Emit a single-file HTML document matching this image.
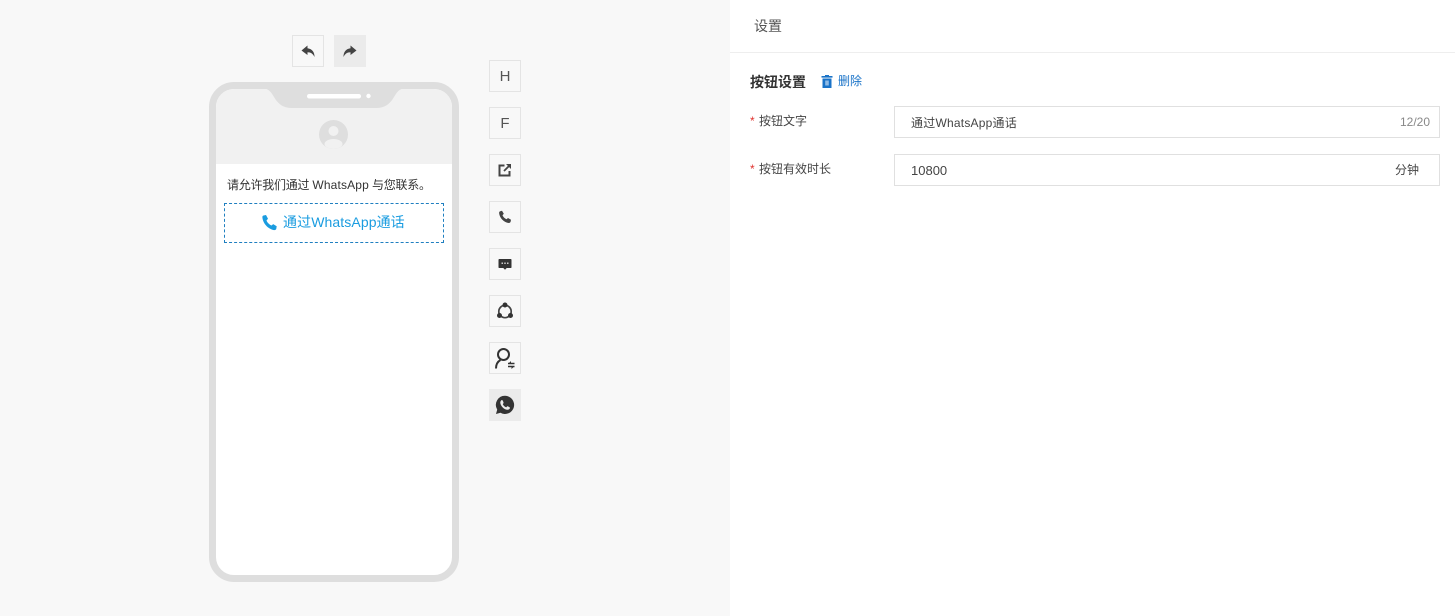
<!DOCTYPE html>
<html><head><meta charset="utf-8"><style>
html,body{margin:0;padding:0;width:1455px;height:616px;overflow:hidden;background:#f8f8f8;font-family:"Liberation Sans","Noto Sans CJK SC",sans-serif}
#o{position:fixed;left:0;top:0;width:1455px;height:616px;overflow:hidden;contain:strict}
#w{position:absolute;left:0;top:0;width:1455px;height:616px;filter:blur(.35px)}
.a{position:absolute;box-sizing:border-box;white-space:nowrap}
.b{position:absolute;box-sizing:border-box;width:32px;height:32px;border:1px solid #e4e4e4;display:flex;align-items:center;justify-content:center;color:#555;font-size:14px}
.on{background:#ebebeb;border-color:#ebebeb}
.in{position:absolute;left:894px;width:546px;height:32px;border:1px solid #e0e0e0;box-sizing:border-box;background:#fff}
.l{font-size:12px;color:#444;line-height:16px}
.s{color:#e0322e;font-size:12px;line-height:16px}
</style></head><body><div id="o"><div id="w">
<div class="b" style="left:292px;top:35px"><svg width="14" height="13" viewBox="0 0 14 13"><path fill="#444" d="M6.500.5L.5 5.500 6.500 10V7.200c3.300 0 5.500 1.500 7 4.800.2-4.800-2.500-8.300-7-8.800z"/></svg></div>
<div class="b on" style="left:334px;top:35px"><svg width="14" height="13" viewBox="0 0 14 13"><path fill="#444" d="M7.500.5l6 5-6 4.500V7.200c-3.300 0-5.500 1.500-7 4.800-.2-4.800 2.500-8.300 7-8.800z"/></svg></div>

<div class="a" style="left:209px;top:82px;width:250px;height:500px;border:7px solid #dedede;border-radius:25px;background:#fff;overflow:hidden">
<div class="a" style="left:0;top:0;width:236px;height:75px;background:#f1f1f1"></div>
</div>
<svg class="a" style="left:209px;top:82px" width="250" height="90" viewBox="0 0 250 90">
<path fill="#dedede" d="M54 6h142c-6 1-8 4-11 9-4 7-9 11-18 11H83c-9 0-14-4-18-11-3-5-5-8-11-9z"/>
<rect x="98" y="12" width="54" height="4.500" rx="2.200" fill="#fff"/><circle cx="159.500" cy="14" r="2.200" fill="#fff"/>
<defs><clipPath id="c"><circle cx="124.500" cy="52.500" r="14.500"/></clipPath></defs>
<circle cx="124.500" cy="52.500" r="14.500" fill="#dedede"/>
<g clip-path="url(#c)"><circle cx="124.500" cy="49" r="5" fill="#f1f1f1"/><ellipse cx="124.500" cy="62" rx="9" ry="5" fill="#f1f1f1"/></g>
</svg>
<div class="a" style="left:227px;top:177px;font-size:12px;line-height:16px;color:#333;letter-spacing:-.25px">请允许我们通过 <span style="letter-spacing:.15px">WhatsApp</span> 与您联系。</div>
<div class="a" style="left:224px;top:203px;width:220px;height:40px;border:1px dashed #1f7fc0"></div>
<svg class="a" style="left:261px;top:214px" width="17" height="17" viewBox="0 0 17 17"><path fill="#1a9ce0" d="M2.500 1.500L5 1l2 3.800-1.500 1.700c.8 2 2.700 4 5 5l1.700-1.400 3.500 2.200-.4 2.500c-.3 1-1.300 1.500-2.300 1.300C7 15 2 9.500 1.400 3.500c-.1-1 .2-1.700 1.100-2z"/></svg>
<div class="a" style="left:283px;top:213px;font-size:14px;line-height:18px;color:#1a9ce0;letter-spacing:.1px">通过WhatsApp通话</div>

<div class="b" style="left:489px;top:60px;font-size:15px">H</div>
<div class="b" style="left:489px;top:107px;font-size:15px">F</div>
<div class="b" style="left:489px;top:154px"><svg width="14" height="14" viewBox="0 0 14 14"><path fill="none" stroke="#444" stroke-width="2" d="M6.500 2.500H1.500v10h10V8"/><path fill="none" stroke="#444" stroke-width="1.800" d="M6 8l6-6"/><path fill="#444" d="M8 1h5v5z"/></svg></div>
<div class="b" style="left:489px;top:201px"><svg width="14" height="14" viewBox="0 0 14 14"><path fill="#444" d="M2.200 1.200L4 .8l1.800 3-1.300 1.400c.7 1.700 2.200 3.200 4 4l1.500-1.200 3 1.800-.4 2c-.3.800-1 1.300-1.900 1.200C5.800 12.400 1.600 8 1.100 3c0-.8.300-1.500 1.100-1.800z"/></svg></div>
<div class="b" style="left:489px;top:248px"><svg width="14" height="14" viewBox="0 0 14 14"><path fill="#333" d="M1.300 2h11.400a.8.8 0 0 1 .8.800v7.400a.8.800 0 0 1-.8.800H8.700L7 12.800 5.300 11h-4a.8.800 0 0 1-.8-.8V2.800a.8.800 0 0 1 .8-.8z"/><rect x="3.500" y="5.500" width="1.500" height="1.500" fill="#ccc"/><rect x="6.250" y="5.500" width="1.500" height="1.500" fill="#ccc"/><rect x="9" y="5.500" width="1.500" height="1.500" fill="#ccc"/></svg></div>
<div class="b" style="left:489px;top:295px"><svg width="20" height="20" viewBox="0 0 20 20"><circle cx="10" cy="10.500" r="6.200" fill="none" stroke="#444" stroke-width="1.700"/><circle cx="10" cy="4" r="2.500" fill="#333"/><circle cx="4.500" cy="14.500" r="2.500" fill="#333"/><circle cx="15.500" cy="14.500" r="2.500" fill="#333"/></svg></div>
<div class="b" style="left:489px;top:342px"><svg width="24" height="24" viewBox="0 0 24 24"><circle cx="10.500" cy="8.500" r="5.500" fill="none" stroke="#333" stroke-width="2"/><path d="M3 22.500c0-4.500 1.800-7 4.500-8.500" fill="none" stroke="#333" stroke-width="2"/><path d="M15 17.500h6.500M15 20.500h6.500" stroke="#333" stroke-width="1.500"/><path fill="#333" d="M18 15v3h-3zM18.500 23v-3h3z"/></svg></div>
<div class="b on" style="left:489px;top:389px"><svg width="20" height="20" viewBox="0 0 20 20"><path fill="#333" d="M10 .8a9.100 9.100 0 0 0-7.800 13.800L1 19l4.500-1.200A9.100 9.100 0 1 0 10 .8z"/><path fill="#ebebeb" d="M7 5c-.5 0-1.700 1-1.700 2.600 0 3 3.800 7.200 7.200 7.200 1.600 0 2.500-1.200 2.500-2 0-.5-2.300-1.700-2.700-1.600-.4.100-.9 1.100-1.200 1.100-.8 0-3-2-3.300-3-.1-.4.800-1 .8-1.400C8.600 7.500 7.700 5 7 5z"/></svg></div>

<div class="a" style="left:730px;top:0;width:725px;height:616px;background:#fff"></div>
<div class="a" style="left:730px;top:52px;width:725px;height:1px;background:#eee"></div>
<div class="a" style="left:754px;top:16px;font-size:14px;line-height:20px;color:#555">设置</div>
<div class="a" style="left:750px;top:72px;font-size:14px;line-height:20px;font-weight:700;color:#333">按钮设置</div>
<svg class="a" style="left:821px;top:75px" width="12" height="13" viewBox="0 0 12 13"><path fill="#1a73c8" d="M4 0h4v1h3.500v1.600H.5V1H4zM1.500 3.500h9V13h-9z"/><rect x="4.200" y="5.500" width="3.600" height="5" fill="#8fbbe6"/></svg>
<div class="a" style="left:838px;top:73px;font-size:12px;line-height:16px;color:#1a73c8">删除</div>

<div class="a s" style="left:750px;top:113px">*</div>
<div class="a l" style="left:759px;top:113px">按钮文字</div>
<div class="in" style="top:106px"></div>
<div class="a" style="left:911px;top:115px;font-size:12px;line-height:16px;color:#444;letter-spacing:.22px">通过WhatsApp通话</div>
<div class="a" style="left:1400px;top:114px;font-size:12px;line-height:16px;color:#888">12/20</div>

<div class="a s" style="left:750px;top:161px">*</div>
<div class="a l" style="left:759px;top:161px">按钮有效时长</div>
<div class="in" style="top:154px"></div>
<div class="a" style="left:911px;top:163px;font-size:13px;line-height:16px;color:#444">10800</div>
<div class="a" style="left:1395px;top:162px;font-size:12px;line-height:16px;color:#444">分钟</div>
</div></div></body></html>
